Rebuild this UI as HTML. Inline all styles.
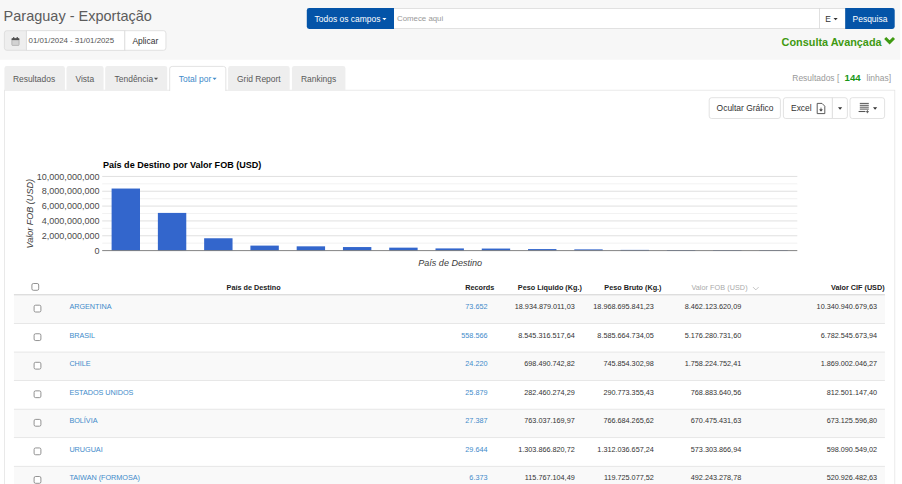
<!DOCTYPE html>
<html><head><meta charset="utf-8">
<style>
*{box-sizing:border-box;margin:0;padding:0}
html,body{width:902px;height:484px;overflow:hidden;background:#fff;font-family:"Liberation Sans",sans-serif;font-size:8.46px;color:#333}
.abs{position:absolute;white-space:nowrap}
#title{position:absolute;left:3.6px;top:5.8px;font-size:14.5px;color:#5c5c5c;line-height:20px;white-space:nowrap}
.t{position:absolute;white-space:nowrap;line-height:12px;font-size:8.46px}
.row{position:absolute;left:13.9px;width:871px;height:10px;font-size:7.25px}
.row>*{position:absolute;white-space:nowrap;line-height:10px;top:0}
.nm{left:55.5px;color:#428bca;letter-spacing:-0.02px}
.n{color:#333}
a.n{color:#428bca}
.c1{right:397.4px}.c2{right:310.2px}.c3{right:231.1px}.c4{right:143.7px}.c5{right:7.8px}
.th{position:absolute;top:283.3px;line-height:10px;font-size:7.25px;font-weight:bold;color:#222;white-space:nowrap}
</style></head><body>
<svg class="abs" style="left:0;top:0" width="902" height="484" viewBox="0 0 902 484" font-family="Liberation Sans, sans-serif">
<rect x="0" y="0" width="900.3" height="59.7" fill="#f7f7f7"/>
<!-- date group -->
<path d="M6.8 30.7 H26.4 V50.3 H6.8 Q4.4 50.3 4.4 47.9 V33.1 Q4.4 30.7 6.8 30.7 Z" fill="#eee" stroke="#dadada" stroke-width="0.8"/>
<rect x="26.4" y="30.7" width="98.4" height="19.6" fill="#fff" stroke="#dadada" stroke-width="0.8"/>
<path d="M124.8 30.7 H163.5 Q165.9 30.7 165.9 33.1 V47.9 Q165.9 50.3 163.5 50.3 H124.8 Z" fill="#fff" stroke="#dadada" stroke-width="0.8"/>
<g transform="translate(11,36.9) scale(0.64)"><path d="M1 3.2 Q1 2 2.2 2 H11.8 Q13 2 13 3.2 V12 Q13 13.4 11.8 13.4 H2.2 Q1 13.4 1 12 Z" fill="#8c8c8c"/><rect x="1.8" y="5.2" width="10.4" height="7.4" fill="#d2d2d2"/><rect x="1" y="2" width="12" height="3" rx="1" fill="#505050"/><rect x="3.2" y="0.2" width="2" height="3.6" rx="0.8" fill="#505050"/><rect x="8.8" y="0.2" width="2" height="3.6" rx="0.8" fill="#505050"/></g>
<!-- search -->
<rect x="393" y="8.5" width="427" height="20" fill="#fff" stroke="#dadada" stroke-width="0.8"/>
<rect x="819.4" y="8.5" width="26" height="20" fill="#fff" stroke="#dadada" stroke-width="0.8"/>
<path d="M309.2 8.1 H394 V28.9 H309.2 Q306.8 28.9 306.8 26.5 V10.5 Q306.8 8.1 309.2 8.1 Z" fill="#0454a8"/>
<path d="M845.2 8.1 H892.3 Q894.7 8.1 894.7 10.5 V26.5 Q894.7 28.9 892.3 28.9 H845.2 Z" fill="#0454a8"/>
<path d="M382.3 17.9 h4.2 l-2.1 2.4 Z" fill="#fff"/>
<path d="M833.5 17.9 h4.2 l-2.1 2.4 Z" fill="#333"/>
<path d="M885.2 38 L889.6 42.4 L894 38" fill="none" stroke="#3f9a12" stroke-width="2.9"/>
<!-- panel -->
<rect x="4.4" y="90.2" width="890.4" height="400" fill="#fff" stroke="#e4e4e4" stroke-width="0.8"/>
<!-- tabs -->
<g fill="#eee">
<path d="M4.4 90.5 V68.4 Q4.4 66 6.8 66 H62.5 Q64.9 66 64.9 68.4 V90.5 Z"/>
<path d="M66.5 90.5 V68.4 Q66.5 66 68.9 66 H101.2 Q103.6 66 103.6 68.4 V90.5 Z"/>
<path d="M105.2 90.5 V68.4 Q105.2 66 107.6 66 H164.8 Q167.2 66 167.2 68.4 V90.5 Z"/>
<path d="M228.1 90.5 V68.4 Q228.1 66 230.5 66 H287.3 Q289.7 66 289.7 68.4 V90.5 Z"/>
<path d="M291.9 90.5 V68.4 Q291.9 66 294.3 66 H343 Q345.4 66 345.4 68.4 V90.5 Z"/>
</g>
<path d="M169.7 91 V68.8 Q169.7 66.4 172.1 66.4 H223.4 Q225.8 66.4 225.8 68.8 V91" fill="#fff" stroke="#dcdcdc" stroke-width="0.8"/>
<path d="M153.9 77.7 h4.2 l-2.1 2.4 Z" fill="#555"/>
<path d="M212.5 77.7 h4.2 l-2.1 2.4 Z" fill="#428bca"/>
<!-- toolbar -->
<rect x="709.2" y="97.7" width="71.2" height="20.8" rx="2.4" fill="#fff" stroke="#dbdbdb" stroke-width="0.8"/>
<path d="M785.8 97.7 H832.4 V118.5 H785.8 Q783.4 118.5 783.4 116.1 V100.1 Q783.4 97.7 785.8 97.7 Z" fill="#fff" stroke="#dbdbdb" stroke-width="0.8"/>
<path d="M832.4 97.7 H845 Q847.4 97.7 847.4 100.1 V116.1 Q847.4 118.5 845 118.5 H832.4 Z" fill="#fff" stroke="#dbdbdb" stroke-width="0.8"/>
<rect x="850" y="97.7" width="34.6" height="20.8" rx="2.4" fill="#fff" stroke="#dbdbdb" stroke-width="0.8"/>
<path d="M838 107.3 h4.2 l-2.1 2.4 Z" fill="#333"/>
<path d="M873 107.3 h4.2 l-2.1 2.4 Z" fill="#333"/>
<g transform="translate(816.2,102.8)"><path d="M1 0.6 H5.8 L8.6 3.4 V10.8 H1 Z" fill="#fff" stroke="#4a4a4a" stroke-width="0.9"/><path d="M4.8 4.8 V8 M3.5 6.9 L4.8 8.4 L6.1 6.9 Z" stroke="#4a4a4a" stroke-width="0.8" fill="#4a4a4a"/></g>
<g stroke="#555"><path d="M859.8 103.4H868.8M859.8 105.3H868.8M859.8 107.2H868.8M859.8 109.1H868.8" stroke-width="1"/><path d="M858.6 111.5H865.4" stroke-width="1.1"/><path d="M867.4 110.2V113.2M865.9 111.7H868.9" stroke-width="0.9"/></g>
<!-- chart -->
<text x="103" y="168" font-size="9.06" font-weight="bold" fill="#000">País de Destino por Valor FOB (USD)</text>
<g stroke="#f1f1f1" stroke-width="0.9"><line x1="102.2" x2="797.3" y1="243.18" y2="243.18"/><line x1="102.2" x2="797.3" y1="228.35" y2="228.35"/><line x1="102.2" x2="797.3" y1="213.51" y2="213.51"/><line x1="102.2" x2="797.3" y1="198.68" y2="198.68"/><line x1="102.2" x2="797.3" y1="183.85" y2="183.85"/></g>
<g stroke="#dcdcdc" stroke-width="0.9"><line x1="102.2" x2="797.3" y1="235.77" y2="235.77"/><line x1="102.2" x2="797.3" y1="220.93" y2="220.93"/><line x1="102.2" x2="797.3" y1="206.10" y2="206.10"/><line x1="102.2" x2="797.3" y1="191.26" y2="191.26"/><line x1="102.2" x2="797.3" y1="176.43" y2="176.43"/></g>
<g fill="#3366cc"><rect x="111.60" y="188.54" width="28.4" height="62.06"/><rect x="157.87" y="212.91" width="28.4" height="37.69"/><rect x="204.14" y="238.26" width="28.4" height="12.34"/><rect x="250.41" y="245.60" width="28.4" height="5.00"/><rect x="296.68" y="246.33" width="28.4" height="4.27"/><rect x="342.95" y="247.05" width="28.4" height="3.55"/><rect x="389.22" y="247.65" width="28.4" height="2.95"/><rect x="435.49" y="248.41" width="28.4" height="2.19"/><rect x="481.76" y="248.56" width="28.4" height="2.04"/><rect x="528.03" y="249.07" width="28.4" height="1.53"/><rect x="574.30" y="249.37" width="28.4" height="1.23"/><rect x="620.57" y="249.89" width="28.4" height="0.71"/><rect x="666.84" y="250.04" width="28.4" height="0.56"/><rect x="713.11" y="250.11" width="28.4" height="0.49"/><rect x="759.38" y="250.19" width="28.4" height="0.41"/></g>
<line x1="102.2" x2="797.3" y1="250.6" y2="250.6" stroke="#777" stroke-width="0.9"/>
<g font-size="9.06" fill="#4a4a4a" text-anchor="end"><text x="99.6" y="253.70">0</text><text x="99.6" y="238.87">2,000,000,000</text><text x="99.6" y="224.03">4,000,000,000</text><text x="99.6" y="209.20">6,000,000,000</text><text x="99.6" y="194.36">8,000,000,000</text><text x="99.6" y="179.53">10,000,000,000</text></g>
<text x="450.2" y="265.7" font-size="9.06" font-style="italic" fill="#3c3c3c" text-anchor="middle">País de Destino</text>
<text transform="translate(33.1,213.8) rotate(-90)" font-size="9.06" font-style="italic" fill="#3c3c3c" text-anchor="middle">Valor FOB (USD)</text>
<!-- table -->
<rect x="13.9" y="294.90" width="871" height="28.55" fill="#f9f9f9"/>
<rect x="34.1" y="305.20" width="6.8" height="6.8" rx="1.5" fill="#fff" stroke="#808080" stroke-width="0.85"/>
<rect x="13.9" y="323.15" width="871" height="0.7" fill="#dedede"/>
<rect x="34.1" y="333.75" width="6.8" height="6.8" rx="1.5" fill="#fff" stroke="#808080" stroke-width="0.85"/>
<rect x="13.9" y="352.00" width="871" height="28.55" fill="#f9f9f9"/>
<rect x="13.9" y="351.70" width="871" height="0.7" fill="#dedede"/>
<rect x="34.1" y="362.30" width="6.8" height="6.8" rx="1.5" fill="#fff" stroke="#808080" stroke-width="0.85"/>
<rect x="13.9" y="380.25" width="871" height="0.7" fill="#dedede"/>
<rect x="34.1" y="390.85" width="6.8" height="6.8" rx="1.5" fill="#fff" stroke="#808080" stroke-width="0.85"/>
<rect x="13.9" y="409.10" width="871" height="28.55" fill="#f9f9f9"/>
<rect x="13.9" y="408.80" width="871" height="0.7" fill="#dedede"/>
<rect x="34.1" y="419.40" width="6.8" height="6.8" rx="1.5" fill="#fff" stroke="#808080" stroke-width="0.85"/>
<rect x="13.9" y="437.35" width="871" height="0.7" fill="#dedede"/>
<rect x="34.1" y="447.95" width="6.8" height="6.8" rx="1.5" fill="#fff" stroke="#808080" stroke-width="0.85"/>
<rect x="13.9" y="466.20" width="871" height="28.55" fill="#f9f9f9"/>
<rect x="13.9" y="465.90" width="871" height="0.7" fill="#dedede"/>
<rect x="34.1" y="476.50" width="6.8" height="6.8" rx="1.5" fill="#fff" stroke="#808080" stroke-width="0.85"/>
<rect x="13.9" y="294" width="871" height="1.4" fill="#dedede"/>
<rect x="31.9" y="283.5" width="6.8" height="6.8" rx="1.5" fill="#fff" stroke="#808080" stroke-width="0.85"/>
<path d="M753 287.1 L755.8 289.9 L758.6 287.1" fill="none" stroke="#aaa" stroke-width="0.7"/>
</svg>

<div id="title">Paraguay - Exportação</div>
<div class="t" style="left:28.6px;top:35.3px;font-size:7.85px;color:#555">01/01/2024 - 31/01/2025</div>
<div class="t" style="left:132.4px;top:35px">Aplicar</div>
<div class="t" style="left:314.6px;top:12.6px;color:#fff">Todos os campos</div>
<div class="t" style="left:397px;top:13.2px;font-size:7.85px;color:#999">Comece aqui</div>
<div class="t" style="left:825.3px;top:12.6px">E</div>
<div class="t" style="left:852.6px;top:12.6px;color:#fff">Pesquisa</div>
<div class="t" style="left:781.6px;top:34.7px;font-size:10.87px;font-weight:bold;color:#3f9a12;line-height:14px">Consulta Avançada</div>

<div class="t" style="left:12.9px;top:72.6px;color:#5a5a5a">Resultados</div>
<div class="t" style="left:75.5px;top:72.6px;color:#5a5a5a">Vista</div>
<div class="t" style="left:114.6px;top:72.6px;color:#5a5a5a">Tendência</div>
<div class="t" style="left:178.8px;top:72.6px;color:#428bca">Total por</div>
<div class="t" style="left:237px;top:72.6px;color:#5a5a5a">Grid Report</div>
<div class="t" style="left:301px;top:72.6px;color:#5a5a5a">Rankings</div>

<div class="t" style="left:792.3px;top:71.9px;color:#999">Resultados [</div>
<div class="t" style="left:844.6px;top:72.4px;color:#1a961a;font-weight:bold;font-size:9.6px">144</div>
<div class="t" style="left:866.6px;top:71.9px;color:#999">linhas]</div>

<div class="t" style="left:716.6px;top:102px">Ocultar Gráfico</div>
<div class="t" style="left:791px;top:102px">Excel</div>

<div class="th" style="left:226.6px">País de Destino</div>
<div class="th" style="left:465.3px">Records</div>
<div class="th" style="left:517.8px">Peso Líquido (Kg.)</div>
<div class="th" style="left:604.3px">Peso Bruto (Kg.)</div>
<div class="th" style="left:691.4px;font-weight:normal;color:#aaa;letter-spacing:0.05px">Valor FOB (USD)</div>
<div class="th" style="right:17.4px">Valor CIF (USD)</div>
<div class="row" style="top:302.10px"><a class="nm">ARGENTINA</a><a class="n c1">73.652</a><span class="n c2">18.934.879.011,03</span><span class="n c3">18.968.695.841,23</span><span class="n c4">8.462.123.620,09</span><span class="n c5">10.340.940.679,63</span></div>
<div class="row" style="top:330.65px"><a class="nm">BRASIL</a><a class="n c1">558.566</a><span class="n c2">8.545.316.517,64</span><span class="n c3">8.585.664.734,05</span><span class="n c4">5.176.280.731,60</span><span class="n c5">6.782.545.673,94</span></div>
<div class="row" style="top:359.20px"><a class="nm">CHILE</a><a class="n c1">24.220</a><span class="n c2">698.490.742,82</span><span class="n c3">745.854.302,98</span><span class="n c4">1.758.224.752,41</span><span class="n c5">1.869.002.046,27</span></div>
<div class="row" style="top:387.75px"><a class="nm">ESTADOS UNIDOS</a><a class="n c1">25.879</a><span class="n c2">282.460.274,29</span><span class="n c3">290.773.355,43</span><span class="n c4">768.883.640,56</span><span class="n c5">812.501.147,40</span></div>
<div class="row" style="top:416.30px"><a class="nm">BOLÍVIA</a><a class="n c1">27.387</a><span class="n c2">763.037.169,97</span><span class="n c3">766.684.265,62</span><span class="n c4">670.475.431,63</span><span class="n c5">673.125.596,80</span></div>
<div class="row" style="top:444.85px"><a class="nm">URUGUAI</a><a class="n c1">29.644</a><span class="n c2">1.303.866.820,72</span><span class="n c3">1.312.036.657,24</span><span class="n c4">573.303.866,94</span><span class="n c5">598.090.549,02</span></div>
<div class="row" style="top:473.40px"><a class="nm">TAIWAN (FORMOSA)</a><a class="n c1">6.373</a><span class="n c2">115.767.104,49</span><span class="n c3">119.725.077,52</span><span class="n c4">492.243.278,78</span><span class="n c5">520.926.482,63</span></div>
</body></html>
